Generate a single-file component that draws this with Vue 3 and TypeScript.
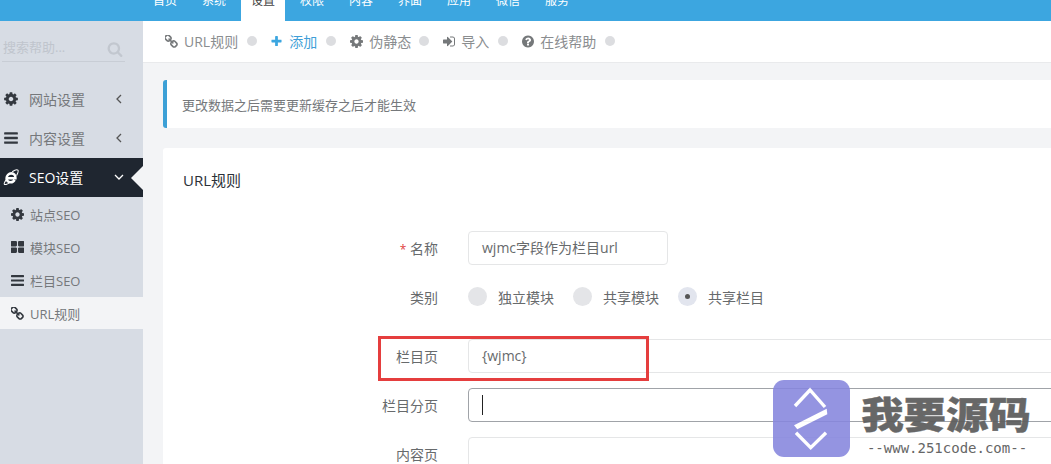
<script setup lang="ts">
const icons: Record<string, string> = {
  cog: 'M1152 896q0-106-75-181t-181-75-181 75-75 181 75 181 181 75 181-75 75-181zm512-109v222q0 12-8 23t-20 13l-185 28q-19 54-39 91 35 50 107 138 10 12 10 25t-9 23q-27 37-99 108t-94 71q-12 0-26-9l-138-108q-44 23-91 38-16 136-29 186-7 28-36 28h-222q-14 0-24.500-8.500t-11.500-21.500l-28-184q-49-16-90-37l-141 107q-10 9-25 9-14 0-25-11-126-114-165-168-7-10-7-23 0-12 8-23 15-21 51-66.500t54-70.500q-27-50-41-99l-183-27q-13-2-21-12.500t-8-23.500v-222q0-12 8-23t19-13l186-28q14-46 39-92-40-57-107-138-10-12-10-24 0-10 9-23 26-36 98.500-107.500t94.500-71.500q13 0 26 10l138 107q44-23 91-38 16-136 29-186 7-28 36-28h222q14 0 24.500 8.500t11.500 21.500l28 184q49 16 90 37l142-107q9-9 24-9 13 0 25 10 129 119 165 170 7 8 7 22 0 12-8 23-15 21-51 66.500t-54 70.500q26 50 41 98l183 28q13 2 21 12.500t8 23.500z',
  bars: 'M1664 1344v128q0 26-19 45t-45 19h-1408q-26 0-45-19t-19-45v-128q0-26 19-45t45-19h1408q26 0 45 19t19 45zm0-512v128q0 26-19 45t-45 19h-1408q-26 0-45-19t-19-45v-128q0-26 19-45t45-19h1408q26 0 45 19t19 45zm0-512v128q0 26-19 45t-45 19h-1408q-26 0-45-19t-19-45v-128q0-26 19-45t45-19h1408q26 0 45 19t19 45z',
  link: 'M1456 1216q0-40-28-68l-208-208q-28-28-68-28-42 0-72 32 3 3 19 18.500t21.500 21.500 15 19 13 25.500 3.500 27.500q0 40-28 68t-68 28q-15 0-27.500-3.500t-25.500-13-19-15-21.500-21.500-18.500-19q-33 31-33 73 0 40 28 68l206 207q27 27 68 27 40 0 68-26l147-146q28-28 28-67zm-703-705q0-40-28-68l-206-207q-28-28-68-28-39 0-68 27l-147 146q-28 28-28 67 0 40 28 68l208 208q27 27 68 27 42 0 72-31-3-3-19-18.500t-21.500-21.500-15-19-13-25.500-3.500-27.500q0-40 28-68t68-28q15 0 27.500 3.500t25.500 13 19 15 21.500 21.500 18.500 19q33-31 33-73zm895 705q0 120-85 203l-147 146q-83 83-203 83-121 0-204-85l-206-207q-83-83-83-203 0-123 88-209l-88-88q-86 88-208 88-120 0-204-84l-208-208q-84-84-84-204t85-203l147-146q83-83 203-83 121 0 204 85l206 207q83 83 83 203 0 123-88 209l88 88q86-88 208-88 120 0 204 84l208 208q84 84 84 204z',
  plus: 'M1600 736v192q0 40-28 68t-68 28h-416v416q0 40-28 68t-68 28h-192q-40 0-68-28t-28-68v-416h-416q-40 0-68-28t-28-68v-192q0-40 28-68t68-28h416v-416q0-40 28-68t68-28h192q40 0 68 28t28 68v416h416q40 0 68 28t28 68z',
  signin: 'M1312 896q0 26-19 45l-544 544q-19 19-45 19t-45-19-19-45v-288h-448q-26 0-45-19t-19-45v-384q0-26 19-45t45-19h448v-288q0-26 19-45t45-19 45 19l544 544q19 19 19 45zm352-352v704q0 119-84.500 203.500t-203.500 84.500h-320q-13 0-22.500-9.500t-9.500-22.500q0-4-1-20t-.5-26.500 3-23.500 10-19.500 20.500-6.500h320q66 0 113-47t47-113v-704q0-66-47-113t-113-47h-312q-6 0-12-1t-10-3-10-5.500-6.500-8.500-3-14q0-4-1-20t-.5-26.500 3-23.500 10-19.500 20.500-6.500h320q119 0 203.500 84.500t84.500 203.500z',
  help: 'M1024 1376v-192q0-14-9-23t-23-9h-192q-14 0-23 9t-9 23v192q0 14 9 23t23 9h192q14 0 23-9t9-23zm256-672q0-88-55.500-163t-138.500-116-170-41q-243 0-371 213-15 24 8 42l132 100q7 6 19 6 16 0 25-12 53-68 86-92 34-24 86-24 48 0 85.500 26t37.500 59q0 38-20 61t-68 45q-63 28-115.500 86.500t-52.500 125.500v36q0 14 9 23t23 9h192q14 0 23-9t9-23q0-19 21.500-49.500t54.500-49.500q32-18 49-28.500t46-35 44.500-48 28-60.500 12.500-81zm384 192q0 209-103 385.500t-279.500 279.500-385.500 103-385.500-103-279.500-279.500-103-385.500 103-385.500 279.500-279.500 385.500-103 385.500 103 279.500 279.500 103 385.500z',
  th: 'M832 1024v384q0 52-38 90t-90 38h-512q-52 0-90-38t-38-90v-384q0-52 38-90t90-38h512q52 0 90 38t38 90zm0-768v384q0 52-38 90t-90 38h-512q-52 0-90-38t-38-90v-384q0-52 38-90t90-38h512q52 0 90 38t38 90zm896 768v384q0 52-38 90t-90 38h-512q-52 0-90-38t-38-90v-384q0-52 38-90t90-38h512q52 0 90 38t38 90zm0-768v384q0 52-38 90t-90 38h-512q-52 0-90-38t-38-90v-384q0-52 38-90t90-38h512q52 0 90 38t38 90z',
  search: 'M1216 832q0-185-131.500-316.500t-316.500-131.500-316.500 131.500-131.500 316.500 131.500 316.500 316.500 131.500 316.500-131.500 131.500-316.500zm512 832q0 52-38 90t-90 38q-54 0-90-38l-343-342q-179 124-399 124-143 0-273.500-55.500t-225-150-150-225-55.500-273.500 55.500-273.500 150-225 225-150 273.500-55.500 273.500 55.500 225 150 150 225 55.500 273.500q0 220-124 399l343 343q37 37 37 90z',
}
const topNav = ['首页', '系统', '设置', '权限', '内容', '界面', '应用', '微信', '服务']
const tools = [
  { icon: 'link', text: 'URL规则', on: false },
  { icon: 'plus', text: '添加', on: true },
  { icon: 'cog', text: '伪静态', on: false },
  { icon: 'signin', text: '导入', on: false },
  { icon: 'help', text: '在线帮助', on: false },
]
const subs = [
  { icon: 'cog', text: '站点SEO', on: false },
  { icon: 'th', text: '模块SEO', on: false },
  { icon: 'bars', text: '栏目SEO', on: false },
  { icon: 'link', text: 'URL规则', on: true },
]
const radios = [
  { text: '独立模块', on: false },
  { text: '共享模块', on: false },
  { text: '共享栏目', on: true },
]
</script>

<template>
  <div class="page">
    <header class="top">
      <nav class="nav">
        <span v-for="(n, i) in topNav" :key="n" class="nav-item" :class="{ active: i === 2 }">{{ n }}</span>
      </nav>
    </header>
    <div class="body">
      <aside class="side">
        <div class="search">
          <span class="search-ph">搜索帮助...</span>
          <svg class="search-ic" viewBox="0 0 1792 1792"><path :d="icons.search" /></svg>
        </div>
        <div class="menu">
          <div class="menu-item">
            <svg class="mi" viewBox="0 0 1792 1792"><path :d="icons.cog" /></svg>
            <span class="mt">网站设置</span>
            <svg class="chev" viewBox="0 0 10 10"><path d="M7 1 3 5l4 4" /></svg>
          </div>
          <div class="menu-item">
            <svg class="mi" viewBox="0 0 1792 1792"><path :d="icons.bars" /></svg>
            <span class="mt">内容设置</span>
            <svg class="chev" viewBox="0 0 10 10"><path d="M7 1 3 5l4 4" /></svg>
          </div>
          <div class="menu-item dark">
            <svg class="mi ie" viewBox="0 0 20 20">
              <path class="ie-ring" d="M4.500 13C2 16 .8 18.800 2 19.300c1.500.6 5-1 7.500-2.800" />
              <path class="ie-ring" d="M11.500 3.500C14.500 1.500 17.500.5 18.600 1.500c1 1-.2 4-1.600 6.500" />
              <path class="ie-e" d="M5 11.500h10.500c.3-3.700-2-6-5-6-3.200 0-6 2.800-6 6.200 0 2.800 2 4.800 5 4.800 2.500 0 4-1.100 5-3" />
            </svg>
            <span class="mt">SEO设置</span>
            <svg class="chev" viewBox="0 0 10 10"><path d="M1 3l4 4 4-4" /></svg>
            <i class="notch"></i>
          </div>
          <div class="subs">
            <div v-for="s in subs" :key="s.text" class="sub" :class="{ on: s.on }">
              <svg class="si" viewBox="128 128 1536 1536"><path :d="icons[s.icon]" /></svg>
              <span>{{ s.text }}</span>
            </div>
          </div>
        </div>
      </aside>
      <main class="main">
        <div class="tools">
          <div v-for="t in tools" :key="t.text" class="tool" :class="[{ on: t.on }, 'tool-' + t.icon]">
            <svg class="ti" viewBox="128 128 1536 1536"><path :d="icons[t.icon]" /></svg>
            <span>{{ t.text }}</span>
            <i class="dot"></i>
          </div>
        </div>
        <div class="content">
          <div class="alert">更改数据之后需要更新缓存之后才能生效</div>
          <section class="card">
            <h2 class="card-title">URL规则</h2>
            <div class="form">
              <div class="row">
                <label class="lab"><em>*</em> 名称</label>
                <div class="field short">wjmc字段作为栏目url</div>
              </div>
              <div class="row radios">
                <label class="lab">类别</label>
                <div class="radio-group">
                  <span v-for="r in radios" :key="r.text" class="radio" :class="{ on: r.on }">
                    <i class="rc"></i>{{ r.text }}
                  </span>
                </div>
              </div>
              <div class="row">
                <label class="lab">栏目页</label>
                <div class="field">{wjmc}</div>
              </div>
              <div class="row">
                <label class="lab">栏目分页</label>
                <div class="field focus"><i class="caret"></i></div>
              </div>
              <div class="row">
                <label class="lab">内容页</label>
                <div class="field"></div>
              </div>
            </div>
          </section>
        </div>
      </main>
    </div>
    <div class="redbox"></div>
    <div class="mark">
      <svg class="mark-logo" viewBox="0 0 77 77">
        <rect class="logo-bg" width="77" height="77" rx="11" />
        <path class="logo-line" d="M22 26 37 10l15 17" />
        <path class="logo-band" d="M53.700 28.700 54.300 34.300 24.300 49.300 21 45.300Z" />
        <path class="logo-line" d="M23 52.700 37.700 67.700 53 52.700" />
      </svg>
      <div class="mark-text">
        <div class="mark-cn">我要源码</div>
        <div class="mark-en">--www.251code.com--</div>
      </div>
    </div>
  </div>
</template>

<style>
html, body { margin: 0; padding: 0; overflow: hidden; background: #f3f4f6; }
</style>

<style scoped>
.page {
  position: relative;
  width: 1051px;
  height: 464px;
  overflow: hidden;
  font-family: "Open Sans", "Noto Sans CJK SC", sans-serif;
  font-size: 13px;
  color: #676a6c;
  background: #f3f4f6;
}
svg path { fill: currentColor; }
.top { height: 21px; background: #3ca6e0; overflow: hidden; }
.nav { display: flex; margin: -20px 0 0 143px; }
.nav-item {
  width: 44px;
  height: 41px;
  margin-right: 5px;
  line-height: 41px;
  text-align: center;
  font-size: 12px;
  color: #fff;
}
.nav-item.active { background: #fff; color: #444; }
.body { display: flex; height: 443px; }

.side { width: 143px; flex: none; background: #d7dce4; }
.search {
  display: flex;
  align-items: center;
  justify-content: space-between;
  box-sizing: border-box;
  width: 123px;
  height: 41px;
  margin-left: 2px;
  padding: 11px 2px 0 1px;
  border-bottom: 1px solid #c8cdd5;
}
.search-ph { color: #c0c5cd; font-size: 13px; }
.search-ic { width: 16px; height: 16px; color: #c2c7cf; margin-top: 4px; }
.menu { padding-top: 18px; }
.menu-item {
  position: relative;
  display: flex;
  align-items: center;
  box-sizing: border-box;
  height: 39px;
  padding: 0 0 2px 3px;
  color: #75787b;
}
.mi { width: 16px; height: 16px; flex: none; color: #33383f; }
.mt { margin-left: 10px; font-size: 14px; flex: 1; }
.chev { width: 10px; height: 10px; flex: none; margin-right: 19px; color: #555; }
svg.chev path { fill: none; stroke: currentColor; stroke-width: 1.300; }
.menu-item.dark { background: #1f2630; color: #fff; padding-bottom: 1px; }
.dark .mi { color: #fff; }
.dark .chev { color: #fff; }
svg.ie path.ie-ring { fill: none; stroke: #fff; stroke-width: 1.300; }
svg.ie path.ie-e { fill: none; stroke: #fff; stroke-width: 3.200; }
.notch {
  position: absolute;
  right: 0;
  top: 8px;
  border: 12px solid transparent;
  border-left: 0;
  border-right-color: #f3f4f6;
}
.subs { padding-top: 1px; }
.sub {
  display: flex;
  align-items: center;
  height: 33px;
  padding-left: 11px;
  font-size: 13px;
  color: #75787b;
}
.si { width: 13px; height: 13px; flex: none; margin-right: 6px; color: #33383f; }
.sub.on { background: #f3f4f6; height: 32px; }

.main { flex: 1; min-width: 0; }
.tools {
  display: flex;
  align-items: center;
  box-sizing: border-box;
  height: 42px;
  padding: 0 0 1px 22px;
  background: #fff;
  border-bottom: 1px solid #e9eaec;
}
.tool { display: flex; align-items: center; margin-right: 14px; font-size: 14px; color: #8a8d8f; white-space: nowrap; }
.tool.on { color: #3f9fd8; }
.ti { width: 13px; height: 13px; margin-right: 6px; color: #75787a; }
.tool-plus .ti { width: 11px; margin-right: 7px; }
.tool-signin .ti, .tool-help .ti { width: 12px; }
.on .ti { color: #3ca6e0; }
.dot { width: 10px; height: 10px; margin-left: 9px; border-radius: 50%; background: #dcdde0; }
.tool-cog .dot { margin-left: 8px; }

.content { padding: 17px 0 0 20px; }
.alert {
  display: flex;
  align-items: center;
  box-sizing: border-box;
  height: 48px;
  width: 920px;
  padding-left: 15px;
  border-left: 4px solid #3ca0d6;
  border-radius: 3px 0 0 3px;
  background: #fff;
  font-size: 13px;
  color: #75787b;
}
.card { margin-top: 20px; padding: 20px 20px 0; background: #fff; width: 880px; height: 300px; border-radius: 3px 0 0 0; }
.card-title { margin: 0; height: 24px; line-height: 24px; font-size: 15px; font-weight: 400; color: #2b3038; }
.form { padding-top: 39px; }
.row { display: flex; align-items: center; margin-bottom: 15px; }
.lab { width: 255px; margin-right: 30px; flex: none; text-align: right; font-size: 14px; color: #676a6c; }
.lab em { color: #e04040; font-style: normal; font-size: 12px; }
.field {
  box-sizing: border-box;
  flex: none;
  width: 700px;
  height: 34px;
  line-height: 32px;
  padding-left: 13px;
  border: 1px solid #e5e6e7;
  border-radius: 4px;
  background: #fff;
  font-size: 14px;
  color: #676a6c;
}
.field.short { width: 200px; }
.field.focus { border-color: #a0a3a8; display: flex; align-items: center; }
.caret { width: 1px; height: 20px; background: #222; }
.radios { height: 19px; margin-top: 22px; margin-bottom: 33px; }
.radio-group { display: flex; }
.radio { display: flex; align-items: center; margin-right: 19px; font-size: 14px; color: #676a6c; }
.rc {
  position: relative;
  width: 19px;
  height: 19px;
  margin-right: 11px;
  border-radius: 50%;
  background: #e4e5e8;
}
.radio.on .rc { background: #e2e5ee; }
.radio.on .rc::after {
  content: "";
  position: absolute;
  left: 7px;
  top: 7px;
  width: 5px;
  height: 5px;
  border-radius: 50%;
  background: #555;
}
.redbox {
  position: absolute;
  left: 378px;
  top: 336px;
  box-sizing: border-box;
  width: 271px;
  height: 45px;
  border: 3px solid #e53e3e;
}
.mark {
  position: absolute;
  left: 773px;
  top: 380px;
  display: flex;
  align-items: flex-start;
  pointer-events: none;
}
.mark-logo { width: 77px; height: 77px; flex: none; opacity: .88; }
svg path.logo-line { fill: none; stroke: #fff; stroke-width: 3.400; }
svg path.logo-band { fill: #fff; }
.logo-bg { fill: #8686de; }
.mark-text { margin-left: 8px; width: 176px; text-align: center; }
.mark-cn {
  height: 46px;
  font-family: "Noto Sans CJK SC", sans-serif;
  font-size: 42px;
  font-weight: 900;
  line-height: 46px;
  color: #5f5f5f;
  -webkit-text-stroke: .5px #5f5f5f;
  opacity: .95;
  white-space: nowrap;
  transform: translateY(10px) scale(1.01, .88);
}
.mark-en {
  margin-top: 14px;
  margin-left: 2px;
  font-family: "DejaVu Sans Mono", monospace;
  font-size: 14px;
  line-height: 16px;
  color: #666;
  white-space: nowrap;
}
</style>
